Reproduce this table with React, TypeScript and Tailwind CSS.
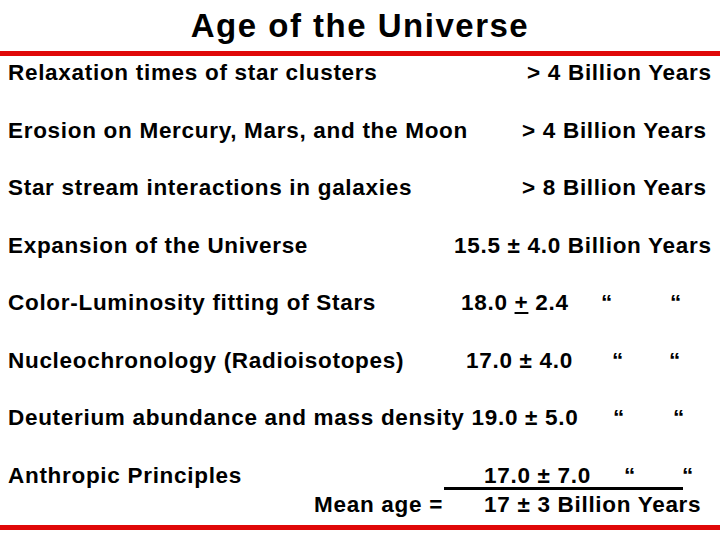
const Quote = ({ w }: { w: string }) => <span className={`shrink-0 ${w}`}>“</span>

const App = () => {
  return (
    <div className="w-[720px] h-[540px] bg-white text-black font-['Liberation_Sans',Arial,sans-serif] font-bold overflow-hidden">
      <div className="h-[51px] flex items-center justify-center">
        <h1 className="text-[33px] tracking-[1.5px] leading-none">Age of the Universe</h1>
      </div>
      <div className="h-[5px] bg-[#e00808]" />
      <div className="mt-[5px] px-[8px] flex flex-col gap-[33.5px] text-[22.5px] tracking-[0.7px] leading-[24px]">
        <div className="flex">
          <span className="w-[519px]">Relaxation times of star clusters</span>
          <span className="whitespace-nowrap">&gt; 4 Billion Years</span>
        </div>
        <div className="flex">
          <span className="w-[514px]">Erosion on Mercury, Mars, and the Moon</span>
          <span className="whitespace-nowrap">&gt; 4 Billion Years</span>
        </div>
        <div className="flex">
          <span className="w-[514px]">Star stream interactions in galaxies</span>
          <span className="whitespace-nowrap">&gt; 8 Billion Years</span>
        </div>
        <div className="flex">
          <span className="w-[446px]">Expansion of the Universe</span>
          <span className="whitespace-nowrap">15.5 ± 4.0 Billion Years</span>
        </div>
        <div className="flex">
          <span className="w-[453px]">Color-Luminosity fitting of Stars</span>
          <span className="w-[140px]">
            18.0 <span className="underline">+</span> 2.4
          </span>
          <Quote w="w-[69px]" />
          <Quote w="" />
        </div>
        <div className="flex">
          <span className="w-[458px]">Nucleochronology (Radioisotopes)</span>
          <span className="w-[146px]">17.0 ± 4.0</span>
          <Quote w="w-[57px]" />
          <Quote w="" />
        </div>
        <div className="flex">
          <span className="w-[605px] whitespace-nowrap">Deuterium abundance and mass density 19.0 ± 5.0</span>
          <Quote w="w-[60px]" />
          <Quote w="" />
        </div>
      </div>
      <div className="mt-[33.5px] px-[8px] text-[22.5px] tracking-[0.7px] leading-[24px]">
        <div className="flex">
          <span className="w-[436px]">Anthropic Principles</span>
          <span className="flex w-[239px] pl-[40px] border-b-[3px] border-black h-[26px] whitespace-nowrap">
            <span className="w-[140px] shrink-0">17.0 ± 7.0</span>
            <Quote w="w-[58px]" />
            <Quote w="" />
          </span>
        </div>
        <div className="flex mt-[3px]">
          <span className="w-[436px] text-right pr-[1px]">Mean age =</span>
          <span className="pl-[40px] whitespace-nowrap">17 ± 3 Billion Years</span>
        </div>
      </div>
      <div className="mt-[8px] h-[5px] bg-[#e00808]" />
    </div>
  )
}

export default App
